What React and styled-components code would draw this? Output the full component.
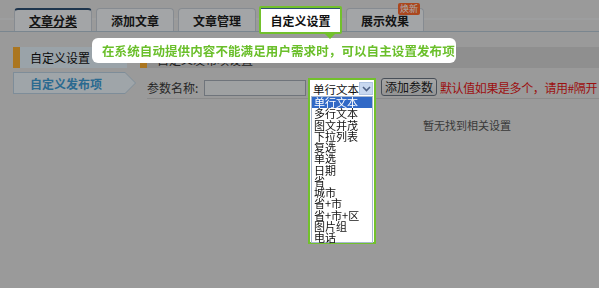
import styled, { createGlobalStyle, css } from 'styled-components';

const GlobalStyle = createGlobalStyle`
  html, body {
    margin: 0;
    padding: 0;
    background: #e6e6e6;
    overflow: hidden;
  }
  body {
    font-family: "Noto Sans CJK SC", "Noto Sans", sans-serif;
    font-size: 12px;
    color: #222;
  }
`;

const Page = styled.div`
  position: relative;
  width: 599px;
  height: 288px;
  overflow: hidden;
`;

// dimmed layer of the guide
const Mask = styled.div`
  position: fixed;
  inset: 0;
  background: rgba(0, 0, 0, 0.33);
  z-index: 10;
`;

const TabBar = styled.div`
  display: flex;
  align-items: flex-start;
  gap: 4px;
  height: 23px;
  padding: 8px 0 0 14px;
  border-bottom: 1px solid #b6c8d6;
  background: linear-gradient(#e6e6e6 0, #e6e6e6 18px, #eef2f5 19px, #e6e6e6 20px);
`;

const Tab = styled.div`
  position: relative;
  box-sizing: border-box;
  width: 78px;
  height: 23px;
  display: flex;
  align-items: center;
  justify-content: center;
  border: 1px solid #c8d0d8;
  border-bottom: none;
  border-radius: 4px 4px 0 0;
  background: #f4f7fa;
  font-weight: bold;
  font-size: 12px;
  color: #1e1e1e;

  ${(p) =>
    p.$current &&
    css`
      border-top: 2px solid #2d4f73;
      span {
        text-decoration: underline;
      }
    `}

  ${(p) =>
    p.$spot &&
    css`
      z-index: 20;
      width: 83px;
      height: 28px;
      margin: -2px 0 0 -1px;
      border: 2px solid #72c12c;
      border-radius: 2px;
      background: #fff;
      box-shadow: inset 0 1px 0 #2d4f73;
      color: #111;
    `}
`;

const Badge = styled.i`
  position: absolute;
  top: -6px;
  right: 3px;
  padding: 0 2px;
  height: 12px;
  line-height: 12px;
  font-style: normal;
  font-weight: normal;
  font-size: 9px;
  color: #fff;
  background: #ff6a2e;
  border-radius: 2px;
`;

const Tip = styled.div`
  position: absolute;
  z-index: 20;
  left: 92px;
  top: 38px;
  width: 364px;
  height: 25px;
  box-sizing: border-box;
  padding-left: 10px;
  display: flex;
  align-items: center;
  white-space: nowrap;
  background: #fff;
  border-radius: 6px;
  color: #6abf2a;
  font-weight: bold;
  font-size: 12.5px;
  letter-spacing: 0.1px;

  &::before {
    content: '';
    position: absolute;
    left: 232px;
    top: -5px;
    border-left: 6px solid transparent;
    border-right: 6px solid transparent;
    border-top: 6px solid #72c12c;
  }
`;

const Body = styled.div`
  display: flex;
  padding-top: 15px;
`;

const Side = styled.div`
  flex: none;
  display: flex;
  flex-direction: column;
  gap: 4px;
  width: 127px;
  padding-left: 13px;
`;

const SideHead = styled.div`
  height: 21px;
  width: 114px;
  box-sizing: border-box;
  display: flex;
  align-items: center;
  padding-left: 10px;
  border-left: 7px solid #ffb030;
  background: #e6f3fc;
  font-size: 12px;
  color: #111;
`;

const SideLink = styled.div`
  position: relative;
  height: 22px;
  width: 112px;
  box-sizing: border-box;
  display: flex;
  align-items: center;
  padding-left: 16px;
  border: 1px solid #bcd3e4;
  border-right: none;
  background: #eef6fc;
  font-size: 12px;
  font-weight: bold;
  color: #3f9ed7;

  &::before,
  &::after {
    content: '';
    position: absolute;
    top: -1px;
    right: -11px;
    border-top: 11px solid transparent;
    border-bottom: 11px solid transparent;
    border-left: 11px solid #bcd3e4;
  }
  &::after {
    top: 0;
    right: -10px;
    border-top-width: 10px;
    border-bottom-width: 10px;
    border-left: 10px solid #eef6fc;
  }
`;

const Main = styled.div`
  flex: 1;
  min-width: 0;
`;

const MainHead = styled.div`
  height: 21px;
  display: flex;
  align-items: flex-end;
  padding-left: 10px;
  border-left: 7px solid #ffb030;
  background: #d6d6d6;
  font-size: 12px;
  line-height: 16px;
  color: #333;
`;

const FormRow = styled.div`
  display: flex;
  align-items: flex-start;
  height: 20px;
  margin: 10px 0 0 7px;
  border-bottom: 1px solid #cfcfcf;
  white-space: nowrap;
`;

const Label = styled.span`
  flex: none;
  margin-top: 1px;
  width: 57px;
  font-size: 12px;
  color: #3a3a3a;
`;

const Input = styled.div`
  flex: none;
  margin-top: 2px;
  width: 102px;
  height: 16px;
  box-sizing: border-box;
  border: 1px solid #a6aeb8;
  background: #eef0f2;
`;

const Spot = styled.div`
  flex: none;
  position: relative;
  z-index: 20;
  margin-left: 2px;
  width: 68px;
  height: 166px;
  box-sizing: border-box;
  border: 2px solid #72c12c;
  background: #fff;
  padding: 1px;
`;

const Select = styled.div`
  display: flex;
  align-items: center;
  justify-content: space-between;
  height: 15px;
  box-sizing: border-box;
  padding-left: 2px;
  font-size: 11.5px;
  line-height: 14px;
  color: #111;
`;

const Arrow = styled.span`
  width: 15px;
  height: 13px;
  display: flex;
  align-items: center;
  justify-content: center;
  background: #c8d8f0;
  border: 1px solid #b0c4e2;
  box-sizing: border-box;
`;

const List = styled.ul`
  margin: 0;
  padding: 0;
  list-style: none;
  height: 147px;
  box-sizing: border-box;
  border: 1px solid #a7b7cf;
`;

const Option = styled.li`
  height: 11.25px;
  line-height: 11.25px;
  padding-left: 2px;
  font-size: 11px;
  color: ${(p) => (p.$on ? '#fff' : '#111')};
  background: ${(p) => (p.$on ? '#3169c6' : 'transparent')};
`;

const AddButton = styled.button`
  flex: none;
  margin: 0 0 0 5px;
  width: 56px;
  height: 18px;
  padding: 0;
  border: 1px solid #6c7684;
  border-radius: 3px;
  background: linear-gradient(#f8f8f8, #dcdcdc);
  font-family: inherit;
  font-size: 12px;
  line-height: 14px;
  color: #222;
`;

const Hint = styled.span`
  margin: 1px 0 0 3px;
  font-size: 12px;
  letter-spacing: -0.4px;
  color: #e81818;
`;

const Empty = styled.div`
  padding: 18px 0 0 283px;
  font-size: 11px;
  color: #555;
`;

const tabs = ['文章分类', '添加文章', '文章管理', '自定义设置', '展示效果'];
const types = ['单行文本', '多行文本', '图文并茂', '下拉列表', '复选', '单选', '日期', '省', '城市', '省+市', '省+市+区', '图片组', '电话'];

const App = () => {
  return (
    <Page>
      <GlobalStyle />
      <TabBar>
        {tabs.map((t, i) => (
          <Tab key={t} $current={i === 0} $spot={i === 3}>
            <span>{t}</span>
            {i === 4 && <Badge>焕新</Badge>}
          </Tab>
        ))}
      </TabBar>
      <Tip>在系统自动提供内容不能满足用户需求时，可以自主设置发布项</Tip>
      <Body>
        <Side>
          <SideHead>自定义设置</SideHead>
          <SideLink>自定义发布项</SideLink>
        </Side>
        <Main>
          <MainHead>自定义发布项设置</MainHead>
          <FormRow>
            <Label>参数名称:</Label>
            <Input />
            <Spot>
              <Select>
                单行文本
                <Arrow>
                  <svg width="9" height="6" viewBox="0 0 9 6">
                    <path d="M1 1l3.5 3.5L8 1" fill="none" stroke="#4d6185" strokeWidth="1.6" />
                  </svg>
                </Arrow>
              </Select>
              <List>
                {types.map((t, i) => (
                  <Option key={t} $on={i === 0}>{t}</Option>
                ))}
              </List>
            </Spot>
            <AddButton>添加参数</AddButton>
            <Hint>默认值如果是多个，请用#隔开</Hint>
          </FormRow>
          <Empty>暂无找到相关设置</Empty>
        </Main>
      </Body>
      <Mask />
    </Page>
  );
};

export default App;
